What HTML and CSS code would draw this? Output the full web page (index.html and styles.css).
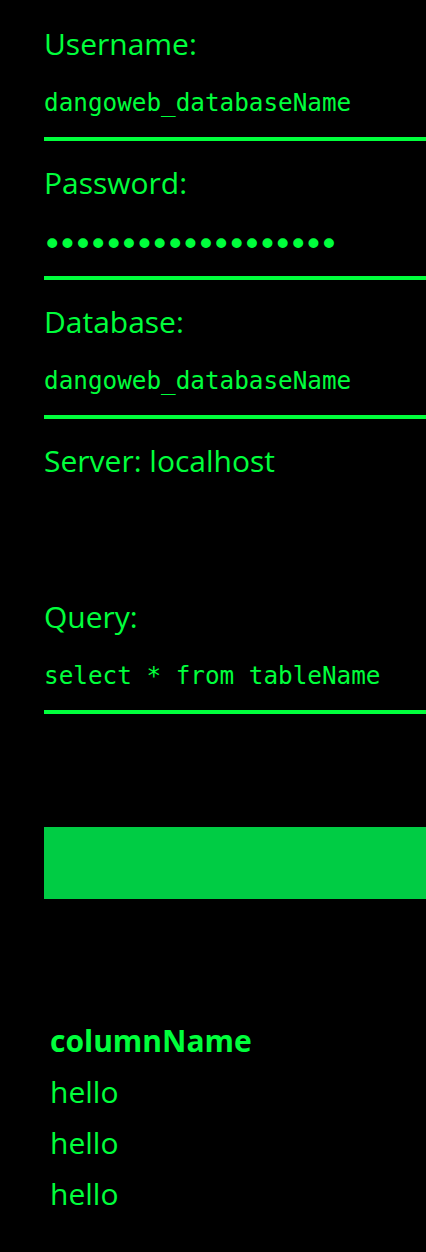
FILE: index.html
```html
<!DOCTYPE html>
<html lang="en">
<head>
<meta charset="utf-8">
<title>Database query</title>
<link rel="stylesheet" href="styles.css">
</head>
<body>
<main class="page">
  <form class="form">
    <div class="field">
      <label class="label" for="user">Username:</label>
      <input class="input" id="user" type="text" value="dangoweb_databaseName">
    </div>
    <div class="field">
      <label class="label" for="pass">Password:</label>
      <input class="input input-password" id="pass" type="password" value="xxxxxxxxxxxxxxxxxxx">
    </div>
    <div class="field">
      <label class="label" for="db">Database:</label>
      <input class="input" id="db" type="text" value="dangoweb_databaseName">
    </div>
    <div class="server">Server: localhost</div>
    <div class="field query">
      <label class="label" for="q">Query:</label>
      <input class="input" id="q" type="text" value="select * from tableName">
    </div>
    <button class="submit" type="button"></button>
  </form>
  <table class="results">
    <thead>
      <tr><th>columnName</th></tr>
    </thead>
    <tbody>
      <tr><td>hello</td></tr>
      <tr><td>hello</td></tr>
      <tr><td>hello</td></tr>
    </tbody>
  </table>
</main>
</body>
</html>
```

FILE: styles.css
```css
html, body {
  margin: 0;
  padding: 0;
  background: #000;
  overflow: hidden;
}

body {
  color: #00ff3c;
  font-family: "Open Sans", "Noto Sans", sans-serif;
}

.page {
  padding: 24px 0 0 44px;
}

.form {
  display: flex;
  flex-direction: column;
}

.field {
  display: flex;
  flex-direction: column;
  margin-bottom: 22px;
}

.label {
  font-size: 30px;
  line-height: 40px;
  height: 40px;
}

.input {
  display: block;
  box-sizing: border-box;
  width: 100%;
  height: 77px;
  margin: 0;
  padding: 23px 0 20px;
  border: none;
  border-bottom: 4px solid #00ff3c;
  background: transparent;
  color: #00ff3c;
  font-family: "DejaVu Sans Mono", "Liberation Mono", monospace;
  font-size: 24.3px;
  line-height: 30px;
  outline: none;
}

.input-password {
  font-size: 34px;
  letter-spacing: -5.1px;
  text-indent: -2px;
  padding: 26px 0 17px;
}

.server {
  font-size: 30px;
  line-height: 40px;
  height: 40px;
  margin-bottom: 116px;
}

.query {
  margin-bottom: 113px;
}

.submit {
  display: block;
  width: 100%;
  height: 72px;
  margin: 0;
  padding: 0;
  border: none;
  background: #00cc44;
}

.results {
  margin-top: 116px;
  border-collapse: collapse;
  font-size: 30px;
}

.results th,
.results td {
  padding: 0 6px;
  line-height: 51px;
  text-align: left;
}

.results th {
  font-weight: 700;
}

.results td {
  font-weight: 400;
}
```
